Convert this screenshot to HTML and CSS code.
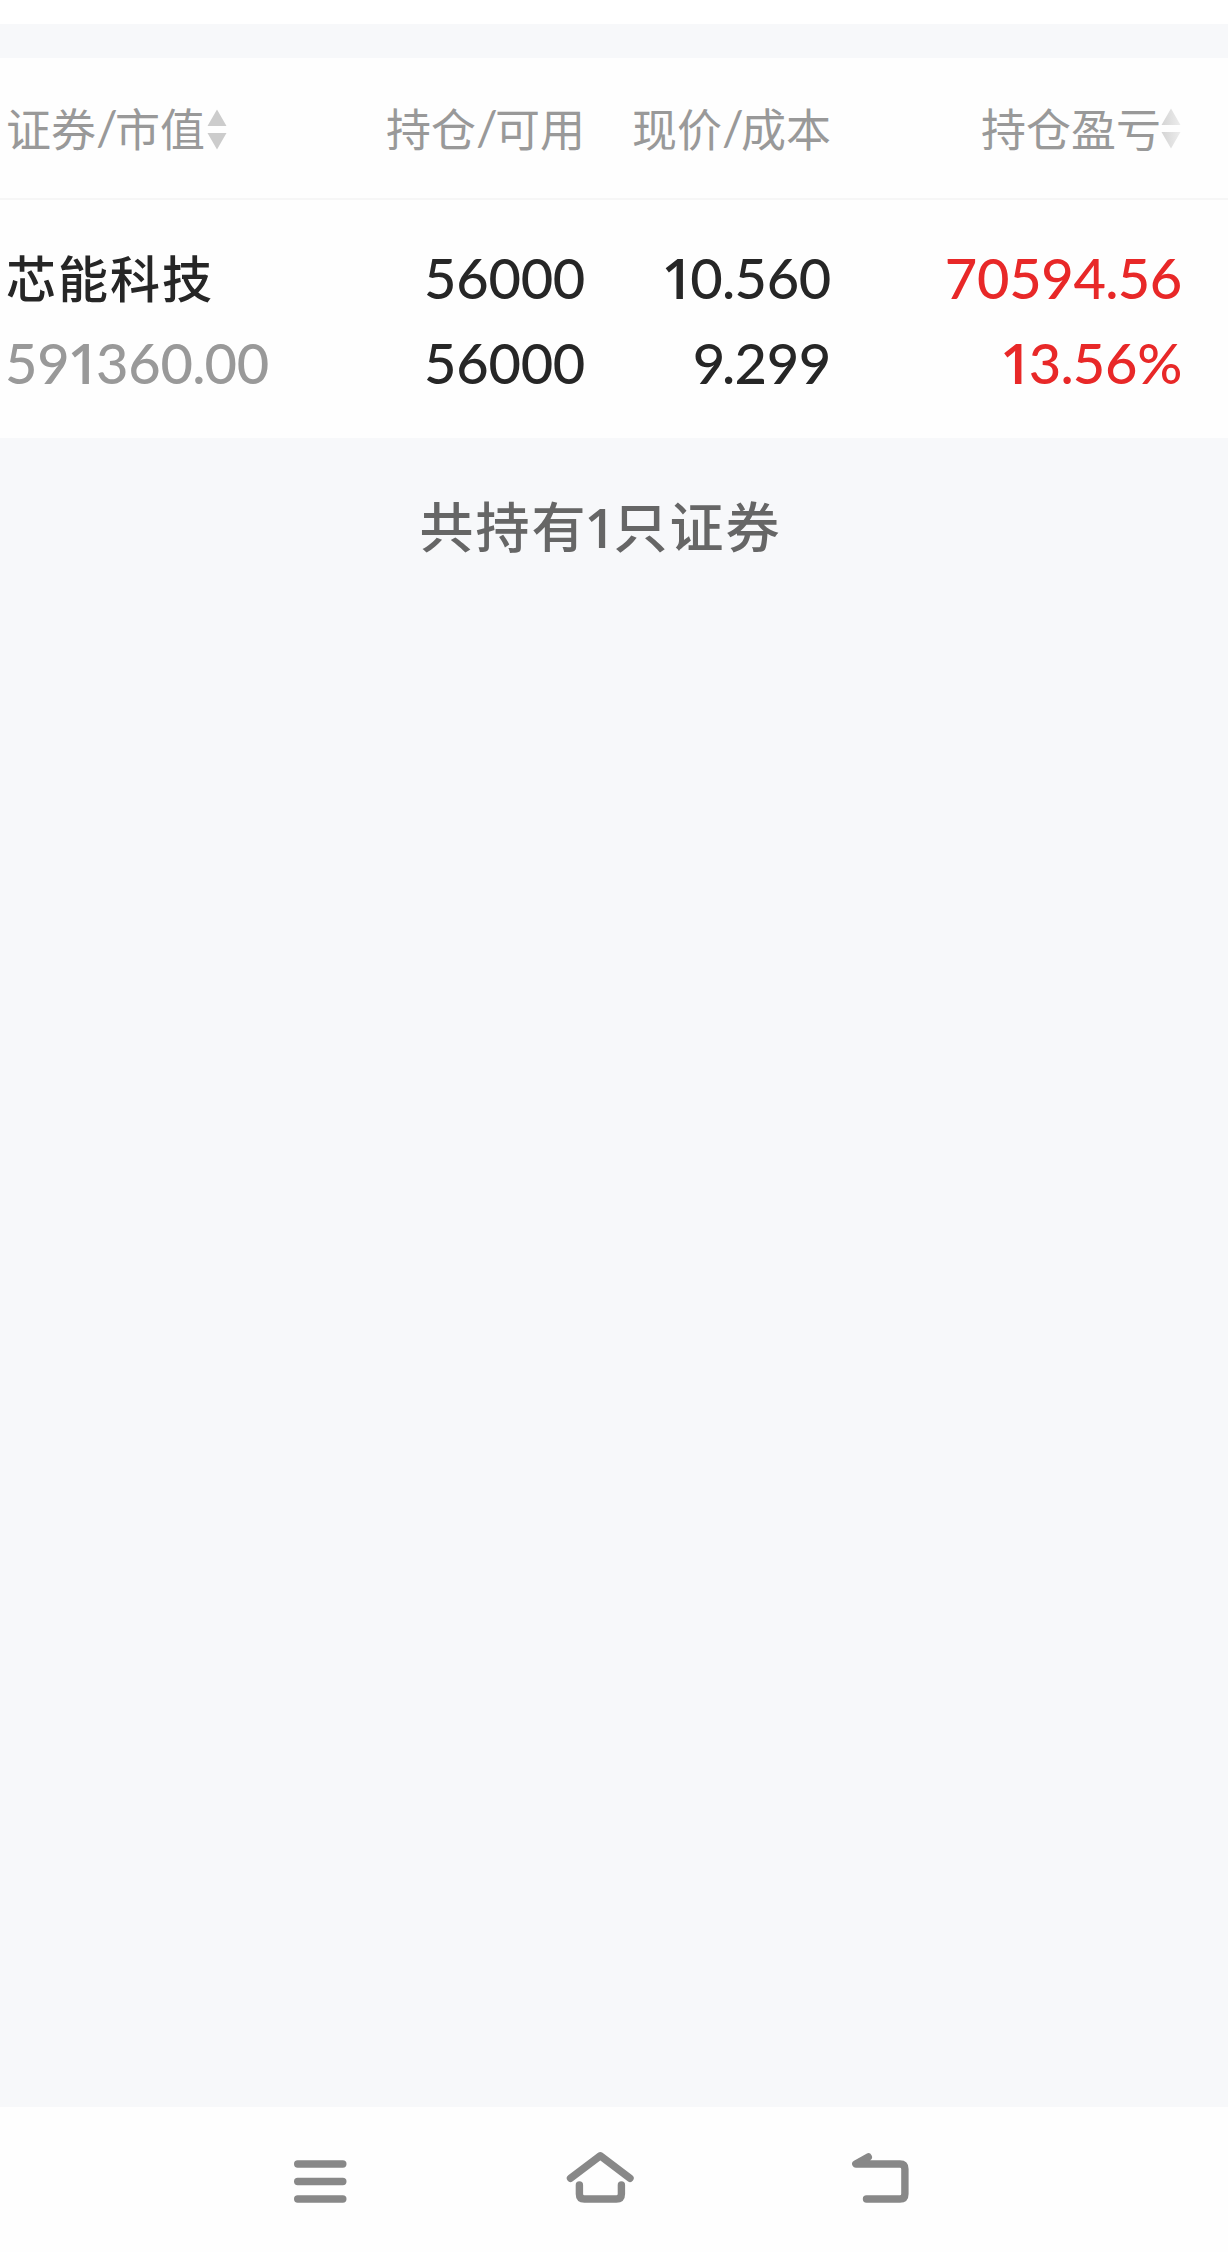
FILE: index.html
```html
<!DOCTYPE html>
<html lang="zh-CN">
<head>
  <meta charset="UTF-8" />
  <meta name="viewport" content="width=device-width,initial-scale=1.0" />
  <title>持仓</title>
  <link rel="stylesheet" href="styles.css">
</head>
<body>

  <main>
    <section class="positions">
      <div class="row head">
        <div class="cell">证券<span class="slash">/</span>市值<svg class="sort" viewBox="0 0 20 42"><path d="M10 0.5L19.5 17H0.5zM0.5 24H19.5L10 40.5z"/></svg></div>
        <div class="cell">持仓<span class="slash">/</span>可用</div>
        <div class="cell">现价<span class="slash">/</span>成本</div>
        <div class="cell">持仓盈亏<svg class="sort light" viewBox="0 0 20 42">
          <defs>
            <linearGradient id="fade" x1="0" y1="0" x2="1" y2="0">
              <stop offset="0" stop-color="#d4d4d4"/>
              <stop offset="1" stop-color="#ededed"/>
            </linearGradient>
          </defs>
          <path d="M10 0.5L19.5 17H0.5zM0.5 24H19.5L10 40.5z"/></svg></div>
      </div>
      <div class="row stock">
        <div class="cell">
          <p class="name">芯能科技</p>
          <p class="value">59<span class="one">1</span>360<span class="dot">.</span>00</p>
        </div>
        <div class="cell">
          <p>56000</p>
          <p>56000</p>
        </div>
        <div class="cell">
          <p><span class="one">1</span>0<span class="dot">.</span>560</p>
          <p>9<span class="dot tight">.</span>299</p>
        </div>
        <div class="cell up">
          <p>70594<span class="dot">.</span>56</p>
          <p><span class="one">1</span>3<span class="dot">.</span>56%</p>
        </div>
      </div>
    </section>
    <p class="total">共持有<span class="one">1</span>只证券</p>
  </main>

  <nav class="navbar">
    <a><svg viewBox="0 0 80 60"><path d="M17.7 14H62.8M17.7 31.5H62.8M17.7 49H62.8"/></svg></a>
    <a><svg viewBox="0 0 80 60"><path d="M10.5 28.3L40.3 5.7L70 28.3M19.4 35V44Q19.4 49 24.4 49H56.4Q61.4 49 61.4 44V35"/></svg></a>
    <a><svg viewBox="0 0 80 60"><path d="M28.3 7L15.8 14H60Q64.9 14 64.9 19V44Q64.9 49 60 49H26.5"/></svg></a>
  </nav>

</body>
</html>
```
FILE: styles.css
```css
* { margin: 0; padding: 0; box-sizing: border-box; }
body {
  display: flex;
  flex-direction: column;
  min-height: 2252px;
  border-top: 24px solid #fff;
  background: #f7f8fa;
  color: #262626;
  font-family: Lato, "Noto Sans CJK SC", sans-serif;
}
main { flex: 1; padding-top: 34px; }
.positions { background: #fefefe; }
.row {
  display: grid;
  grid-template-columns: 332px 247px 246px 351px;
  padding-left: 6px;
}
.cell { text-align: right; white-space: nowrap; }
.cell:first-child { text-align: left; }
.head {
  height: 142px;
  border-bottom: 2px solid #f6f6f6;
  color: #999;
  font-family: "Noto Sans CJK SC", sans-serif;
  font-size: 45px;
  line-height: 139px;
}
.head .cell {
  display: flex;
  justify-content: flex-end;
  height: 139px;
  align-items: center;
}
.head .cell:first-child { justify-content: flex-start; }
.head .cell:last-child { padding-right: 1px; }
.slash {
  width: 19px;
  font-family: Lato, sans-serif;
  font-size: 48px;
  text-align: center;
}
.sort { width: 20px; height: 42px; margin: 4px 0 0 2px; fill: #ccc; }
.sort.light { margin: 2px 0 0; fill: url(#fade); }
.stock {
  height: 238px;
  padding-top: 35px;
  font-size: 56px;
  font-weight: 500;
  letter-spacing: -0.3px;
}
.stock p { height: 85px; line-height: 85px; }
.stock .name {
  font-family: "Noto Sans CJK SC", sans-serif;
  font-size: 50px;
  letter-spacing: 2px;
  line-height: 82px;
}
.stock .value { color: #999; margin-left: -1px; }
.up { color: #e82828; }
.one {
  margin: 0 -3px 0 -2px;
  font-family: "Open Sans", sans-serif;
  font-weight: 600;
}
.dot { margin: 0 -0.5px; }
.dot.tight { margin-left: -3px; }
.total {
  padding-right: 27px;
  color: #666;
  font-size: 54px;
  font-weight: 500;
  letter-spacing: 2px;
  line-height: 179px;
  text-align: center;
}
.total .one { margin: 0 -4px 0 -3px; }
.navbar {
  display: flex;
  height: 145px;
  padding: 43px 0 0 180px;
  background: #fefefe;
}
.navbar a { width: 280px; text-align: center; }
.navbar svg {
  width: 80px;
  height: 60px;
  fill: none;
  stroke: #888;
  stroke-width: 7.4;
  stroke-linecap: round;
  stroke-linejoin: round;
}
```
